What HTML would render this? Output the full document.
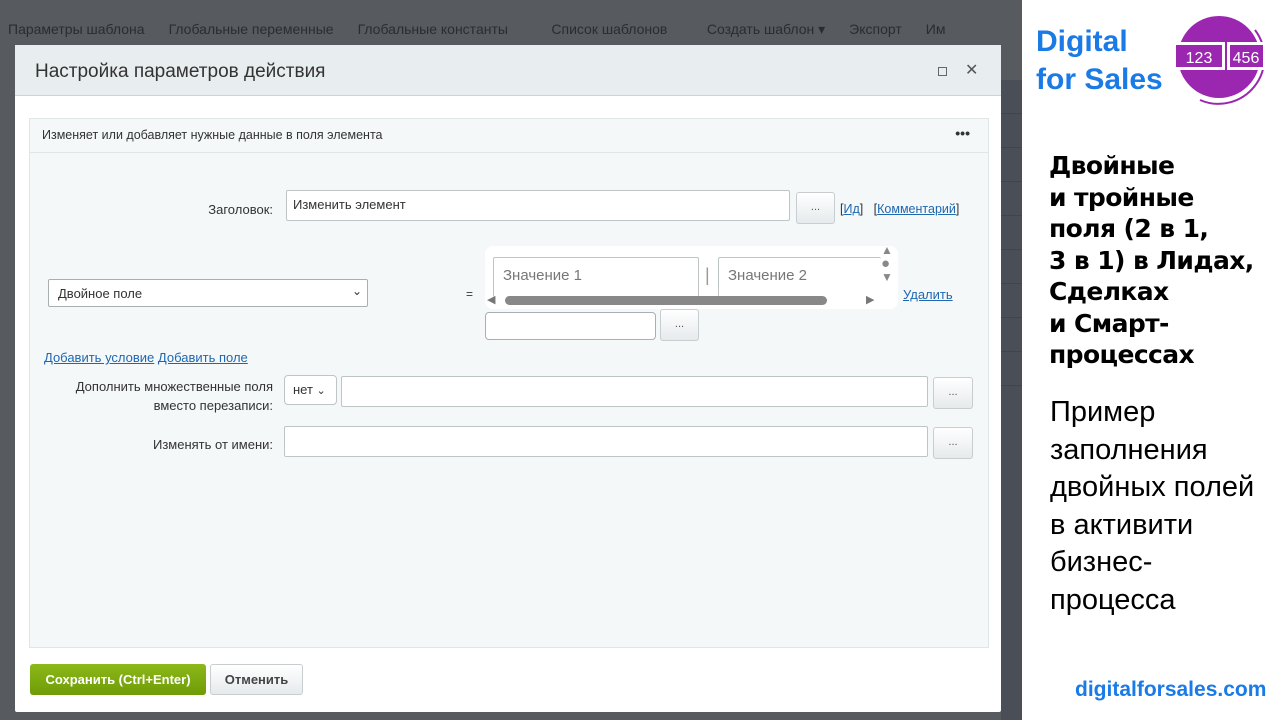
<!DOCTYPE html>
<html><head><meta charset="utf-8"><style>
*{margin:0;padding:0;box-sizing:border-box}
body{width:1280px;height:720px;overflow:hidden;position:relative;font-family:"Liberation Sans","DejaVu Sans",sans-serif;background:#fff}
.bg{position:absolute;left:0;top:0;width:1022px;height:720px;background:#575a5f}
.tb{position:absolute;top:21px;left:8px;font-size:14px;color:#2a2c30;white-space:nowrap}
.tb span{margin-right:24px}
.side{position:absolute;left:1001px;top:80px;width:21px;height:640px;background:#4a4f57}
.side div{height:34px;border-bottom:1px solid #40454c}
.modal{position:absolute;left:15px;top:45px;width:986px;height:667px;background:#fff;border-radius:2px}
.mh{height:51px;background:#e8edef;border-bottom:1px solid #cdd3d6;position:relative}
.mh .t{position:absolute;left:20px;top:16px;font-size:19px;color:#333}
.mh .ic{position:absolute;top:15px;font-size:16px;color:#555}
.panel{position:absolute;left:14px;top:73px;width:960px;height:530px;background:#f5f8f9;border:1px solid #e0e5e7}
.ph{height:34px;border-bottom:1px solid #e0e5e7;font-size:12.5px;color:#333;padding:9px 0 0 12px;position:relative}
.ab{position:absolute;font-size:13px;color:#333}
.inp{position:absolute;background:#fff;border:1px solid #bfc4c7;border-radius:2px}
.btn{position:absolute;background:linear-gradient(#fff,#e6eaec);border:1px solid #c8cdd0;border-radius:3px;font-size:11px;color:#555;text-align:center}
a{color:#2067b0;text-decoration:underline}
.r{position:absolute;text-align:right}
</style></head><body>
<div class="bg"></div>
<div class="tb"><span>Параметры шаблона</span><span>Глобальные переменные</span><span>Глобальные константы</span><span>&nbsp;&nbsp;&nbsp;&nbsp;&nbsp;Список шаблонов</span><span>&nbsp;&nbsp;&nbsp;&nbsp;Создать шаблон ▾</span><span>Экспорт</span><span>Им</span></div>
<div class="side"><div></div><div></div><div></div><div></div><div></div><div></div><div></div><div></div><div></div></div>
<div class="modal">
 <div class="mh"><div class="t">Настройка параметров действия</div><div style="position:absolute;left:923px;top:22px;width:9px;height:9px;border:1.5px solid #666"></div><div class="ic" style="left:950px">✕</div></div>
 <div class="panel">
  <div class="ph">Изменяет или добавляет нужные данные в поля элемента<span style="position:absolute;right:18px;top:6px;font-weight:bold;font-size:14px">•••</span></div>
 </div>
 <div class="r ab" style="left:100px;width:158px;top:157px">Заголовок:</div>
 <div class="inp" style="left:271px;top:145px;width:504px;height:31px;font-size:13px;color:#333;padding:6px 6px">Изменить элемент</div>
 <div class="btn" style="left:781px;top:147px;width:39px;height:32px;line-height:28px">...</div>
 <div class="ab" style="left:825px;top:157px;font-size:12.5px">[<a>Ид</a>]&nbsp;&nbsp;&nbsp;[<a>Комментарий</a>]</div>
 <div class="inp" style="left:33px;top:234px;width:320px;height:28px;font-size:13px;color:#333;padding:6px 9px;border-color:#a9aeb1">Двойное поле<span style="position:absolute;right:5px;top:4px;font-size:12px">⌄</span></div>
 <div class="ab" style="left:451px;top:242px;font-size:12px">=</div>
 <div style="position:absolute;left:470px;top:201px;width:413px;height:63px;background:#fff;border-radius:8px"></div>
 <div class="inp" style="left:478px;top:212px;width:206px;height:40px;border-bottom:none;font-size:15px;color:#777;padding:9px 9px">Значение 1</div>
 <div class="ab" style="left:690px;top:220px;font-size:18px;color:#999">|</div>
 <div class="inp" style="left:703px;top:212px;width:163px;height:40px;border-bottom:none;border-right:none;font-size:15px;color:#777;padding:9px 9px">Значение 2</div>
 <div class="ab" style="left:866px;top:199px;font-size:12px;color:#888;line-height:13px">▲<br><span style="font-size:15px">●</span><br>▼</div>
 <div class="ab" style="left:472px;top:248px;font-size:11px;color:#777">◀</div>
 <div style="position:absolute;left:490px;top:251px;width:322px;height:9px;background:#888;border-radius:5px"></div>
 <div class="ab" style="left:851px;top:248px;font-size:11px;color:#777">▶</div>
 <div class="ab" style="left:888px;top:242px"><a>Удалить</a></div>
 <div class="inp" style="left:470px;top:267px;width:171px;height:28px;border-color:#a9aeb1;border-radius:4px"></div>
 <div class="btn" style="left:645px;top:264px;width:39px;height:32px;line-height:28px">...</div>
 <div class="ab" style="left:29px;top:305px"><a>Добавить условие</a> <a>Добавить поле</a></div>
 <div class="r ab" style="left:30px;width:228px;top:332px;line-height:19px">Дополнить множественные поля<br>вместо перезаписи:</div>
 <div class="inp" style="left:269px;top:330px;width:53px;height:30px;font-size:13px;color:#333;padding:6px 8px;border-radius:4px">нет <span style="font-size:11px">⌄</span></div>
 <div class="inp" style="left:326px;top:331px;width:587px;height:31px"></div>
 <div class="btn" style="left:918px;top:332px;width:40px;height:32px;line-height:28px">...</div>
 <div class="r ab" style="left:30px;width:228px;top:392px">Изменять от имени:</div>
 <div class="inp" style="left:269px;top:381px;width:644px;height:31px"></div>
 <div class="btn" style="left:918px;top:382px;width:40px;height:32px;line-height:28px">...</div>
 <div style="position:absolute;left:15px;top:619px;width:176px;height:31px;background:linear-gradient(#8cb81a,#6f9c06);border-radius:3px;color:#fff;font-size:13px;font-weight:bold;text-align:center;line-height:31px">Сохранить (Ctrl+Enter)</div>
 <div class="btn" style="left:195px;top:619px;width:93px;height:31px;line-height:29px;font-size:13px;font-weight:bold;color:#444">Отменить</div>
</div>
<div style="position:absolute;left:1036px;top:23px;font-size:30px;font-weight:bold;color:#1a7ae6;line-height:38px">Digital<br>for Sales</div>
<svg style="position:absolute;left:1170px;top:10px" width="110" height="100" viewBox="1170 10 110 100">
<circle cx="1219" cy="57" r="41" fill="#9b27b0"/>
<path d="M1255 30 A46 46 0 0 1 1200 100" stroke="#9b27b0" stroke-width="2" fill="none"/>
<rect x="1173" y="42" width="52" height="28" fill="#fff"/><rect x="1176" y="45" width="46" height="22" fill="#9b27b0"/>
<rect x="1227" y="42" width="39" height="28" fill="#fff"/><rect x="1230" y="45" width="33" height="22" fill="#9b27b0"/>
<text x="1199" y="63" fill="#fff" font-size="16" text-anchor="middle" font-family="Liberation Sans">123</text>
<text x="1246" y="63" fill="#fff" font-size="16" text-anchor="middle" font-family="Liberation Sans">456</text>
</svg>
<div style="position:absolute;left:1049px;top:150px;font-family:'DejaVu Sans',sans-serif;font-size:25px;font-weight:bold;color:#000;line-height:31.5px;letter-spacing:-0.6px">Двойные<br>и тройные<br>поля (2 в 1,<br>3 в 1) в Лидах,<br>Сделках<br>и Смарт-<br>процессах</div>
<div style="position:absolute;left:1050px;top:394px;font-size:29px;color:#000;line-height:37.6px">Пример<br>заполнения<br>двойных полей<br>в активити<br>бизнес-<br>процесса</div>
<div style="position:absolute;left:1075px;top:678px;font-size:21px;font-weight:bold;color:#1a7ae6">digitalforsales.com</div>
</body></html>
